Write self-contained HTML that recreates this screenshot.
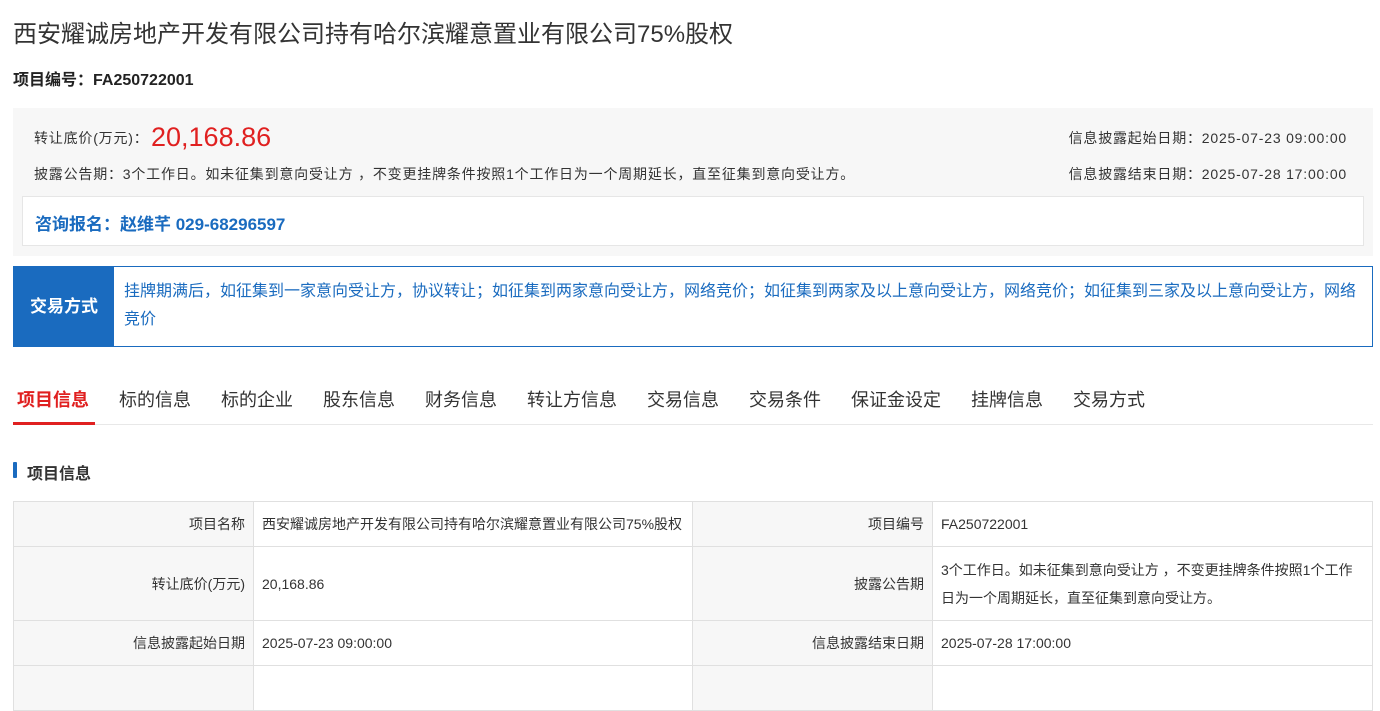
<!DOCTYPE html>
<html><head><meta charset="utf-8"><style>
*{margin:0;padding:0;box-sizing:border-box}
body{width:1380px;height:667px;overflow:hidden;background:#fff;font-family:"Liberation Sans","Noto Sans CJK SC",sans-serif;color:#333;position:relative}
.a{position:absolute}
h1{position:absolute;left:13px;top:14px;font-size:24px;font-weight:normal;color:#333;white-space:nowrap}
.code{left:13px;top:66px;font-size:16px;font-weight:bold;color:#222}
.gray{left:13px;top:108px;width:1360px;height:148px;background:#f7f7f7}
.sm{font-size:14px;letter-spacing:0.8px;color:#333;white-space:nowrap}
.contact{left:22px;top:196px;width:1342px;height:50px;background:#fff;border:1px solid #e6e6e6}
.trade{left:13px;top:266px;width:1360px;height:81px;border:1px solid #1a6bbf}
.tl{position:absolute;left:0;top:0;width:100px;height:79px;background:#1a6bbf;color:#fff;font-weight:bold;font-size:17px;line-height:79px;text-align:center}
.tt{position:absolute;left:110px;top:11px;right:8px;color:#1a6bbf;font-size:16px;line-height:28px}
.tabs{left:13px;top:380px;width:1360px;height:45px;border-bottom:1px solid #e8e8e8;font-size:18px;color:#333}
.tabs span{position:absolute;top:6px;white-space:nowrap}
table{position:absolute;left:13px;top:501px;width:1360px;border-collapse:collapse;font-size:14px;table-layout:fixed}
td{border:1px solid #e0e0e0;padding:0 8px;color:#333}
td.l{background:#f7f7f7;text-align:right}
</style></head><body>
<h1>西安耀诚房地产开发有限公司持有哈尔滨耀意置业有限公司75%股权</h1>
<div class="a code">项目编号：FA250722001</div>
<div class="a gray"></div>
<div class="a sm" style="left:34px;top:128px">转让底价(万元)：</div>
<div class="a" style="left:151px;top:122px;font-size:27px;color:#e02020">20,168.86</div>
<div class="a sm" style="left:34px;top:164px">披露公告期：3个工作日。如未征集到意向受让方 ，不变更挂牌条件按照1个工作日为一个周期延长，直至征集到意向受让方。</div>
<div class="a sm" style="right:33px;top:128px">信息披露起始日期：2025-07-23 09:00:00</div>
<div class="a sm" style="right:33px;top:164px">信息披露结束日期：2025-07-28 17:00:00</div>
<div class="a contact"><div style="position:absolute;left:12px;top:13px;font-size:17px;font-weight:bold;color:#1a6bbf">咨询报名：赵维芊 029-68296597</div></div>
<div class="a trade"><div class="tl">交易方式</div><div class="tt">挂牌期满后，如征集到一家意向受让方，协议转让；如征集到两家意向受让方，网络竞价；如征集到两家及以上意向受让方，网络竞价；如征集到三家及以上意向受让方，网络竞价</div></div>
<div class="a tabs">
<span style="left:4px;color:#e02020;font-weight:bold">项目信息</span>
<span style="left:106px">标的信息</span><span style="left:208px">标的企业</span><span style="left:310px">股东信息</span><span style="left:412px">财务信息</span><span style="left:514px">转让方信息</span><span style="left:634px">交易信息</span><span style="left:736px">交易条件</span><span style="left:838px">保证金设定</span><span style="left:958px">挂牌信息</span><span style="left:1060px">交易方式</span>
<div style="position:absolute;left:0;top:42px;width:82px;height:3px;background:#e02020"></div>
</div>
<div class="a" style="left:13px;top:462px;width:4px;height:16px;background:#1a6bbf;border-radius:1px"></div>
<div class="a" style="left:27px;top:460px;font-size:16px;font-weight:bold;color:#333">项目信息</div>
<table>
<colgroup><col style="width:240px"><col style="width:439px"><col style="width:240px"><col></colgroup>
<tr style="height:45px"><td class="l">项目名称</td><td style="white-space:nowrap">西安耀诚房地产开发有限公司持有哈尔滨耀意置业有限公司75%股权</td><td class="l">项目编号</td><td>FA250722001</td></tr>
<tr style="height:74px"><td class="l">转让底价(万元)</td><td>20,168.86</td><td class="l">披露公告期</td><td style="line-height:28px">3个工作日。如未征集到意向受让方 ，不变更挂牌条件按照1个工作日为一个周期延长，直至征集到意向受让方。</td></tr>
<tr style="height:45px"><td class="l">信息披露起始日期</td><td>2025-07-23 09:00:00</td><td class="l">信息披露结束日期</td><td>2025-07-28 17:00:00</td></tr>
<tr style="height:45px"><td class="l"></td><td></td><td class="l"></td><td></td></tr>
</table>
</body></html>
